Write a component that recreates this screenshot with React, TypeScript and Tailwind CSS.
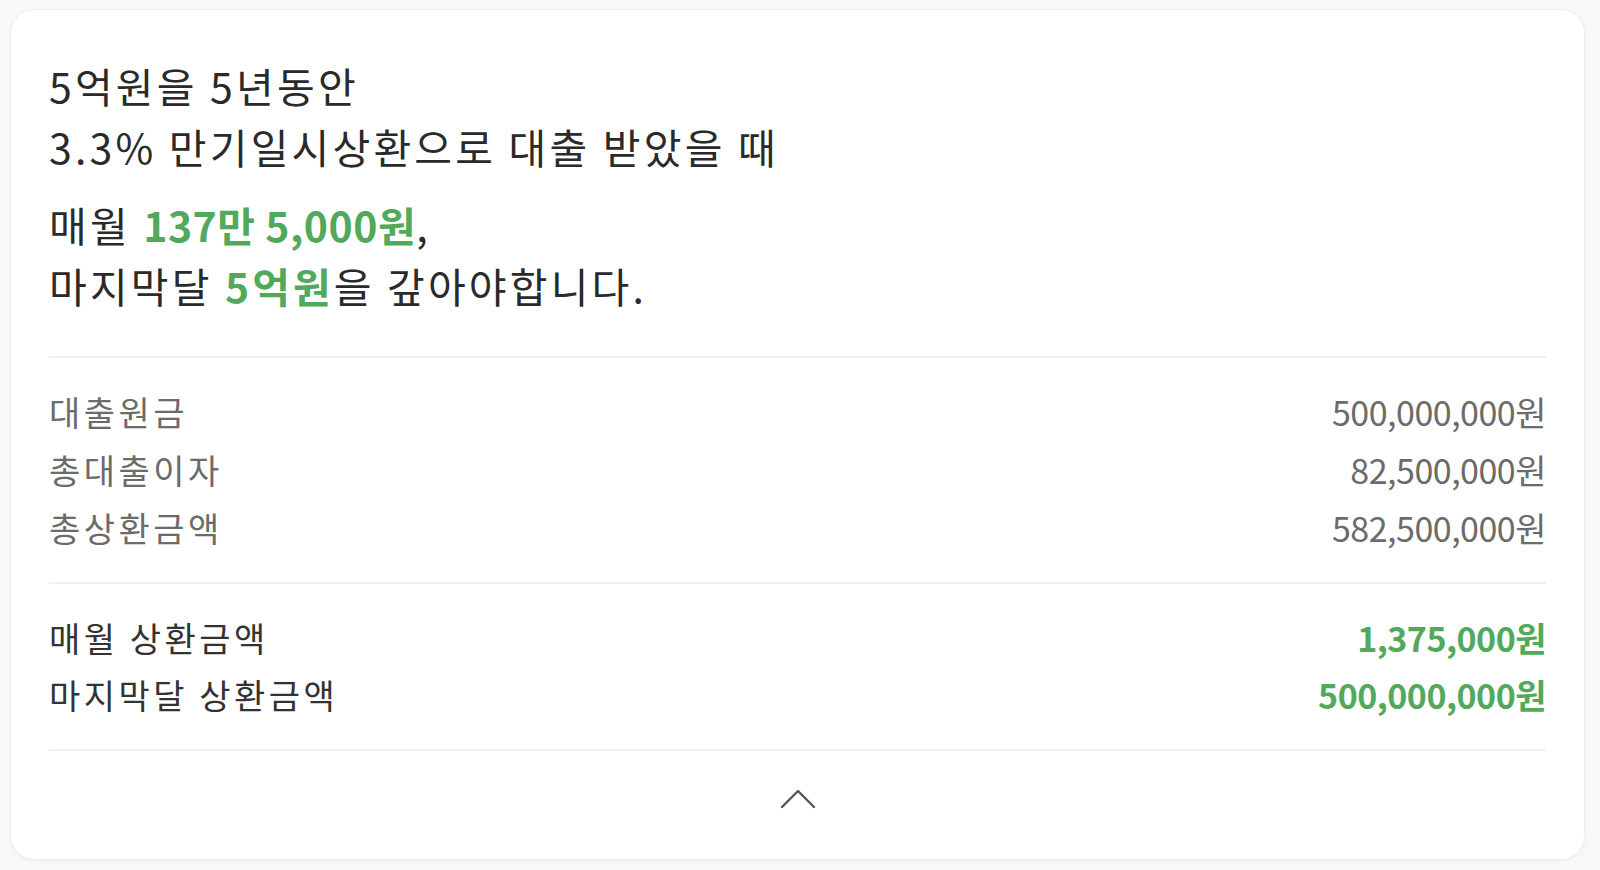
import React from 'react';

const font = { fontFamily: '"Noto Sans CJK KR", "Noto Sans", sans-serif' };

const summary = [
  { label: '대출원금', value: '500,000,000원' },
  { label: '총대출이자', value: '82,500,000원' },
  { label: '총상환금액', value: '582,500,000원' },
];

const repay = [
  { label: '매월 상환금액', value: '1,375,000원' },
  { label: '마지막달 상환금액', value: '500,000,000원' },
];

export default function App() {
  return (
    <div className="min-h-[870px] bg-[#f8f8f8] pt-[9px] pl-[10px] pr-[15px]" style={font}>
      <div className="bg-white rounded-[24px] border border-[#eeeeee] shadow-[0_1px_3px_rgba(0,0,0,0.04)] px-[38px] pt-[45px]">
        <div className="text-[41px] leading-[61px] text-[#2a2a2a] tracking-[3.2px]">
          <p>5억원을 5년동안</p>
          <p>3.3% 만기일시상환으로 대출 받았을 때</p>
        </div>
        <div className="mt-[17px] text-[41px] leading-[61px] text-[#2a2a2a] tracking-[3.2px]">
          <p>
            매월 <span className="font-bold text-[#52a95c] tracking-[0.5px]">137만 5,000원</span>,
          </p>
          <p>
            마지막달 <span className="font-bold text-[#52a95c] tracking-[3px]">5억원</span>을 갚아야합니다.
          </p>
        </div>

        <div className="mt-[40px] h-[2px] bg-[#f0f0f0]" />

        <div className="pt-[25px] pb-[25px]">
          {summary.map((r) => (
            <div key={r.label} className="flex justify-between text-[34px] leading-[58px] text-[#6b6b6b]">
              <span className="tracking-[3.5px]">{r.label}</span>
              <span className="tracking-[-0.5px]">{r.value}</span>
            </div>
          ))}
        </div>

        <div className="h-[2px] bg-[#f0f0f0]" />

        <div className="pt-[25px] pb-[26px]">
          {repay.map((r) => (
            <div key={r.label} className="flex justify-between text-[34px] leading-[57px] text-[#333333]">
              <span className="tracking-[3.5px]">{r.label}</span>
              <span className="font-bold text-[#52a95c] tracking-[-0.5px]">{r.value}</span>
            </div>
          ))}
        </div>

        <div className="h-[2px] bg-[#f0f0f0]" />

        <div className="h-[108px] pb-[12px] flex items-center justify-center">
          <svg width="36" height="20" viewBox="0 0 36 20" fill="none">
            <polyline points="2,18 18,2 34,18" stroke="#555555" strokeWidth="2.4" strokeLinecap="round" strokeLinejoin="round" />
          </svg>
        </div>
      </div>
    </div>
  );
}
